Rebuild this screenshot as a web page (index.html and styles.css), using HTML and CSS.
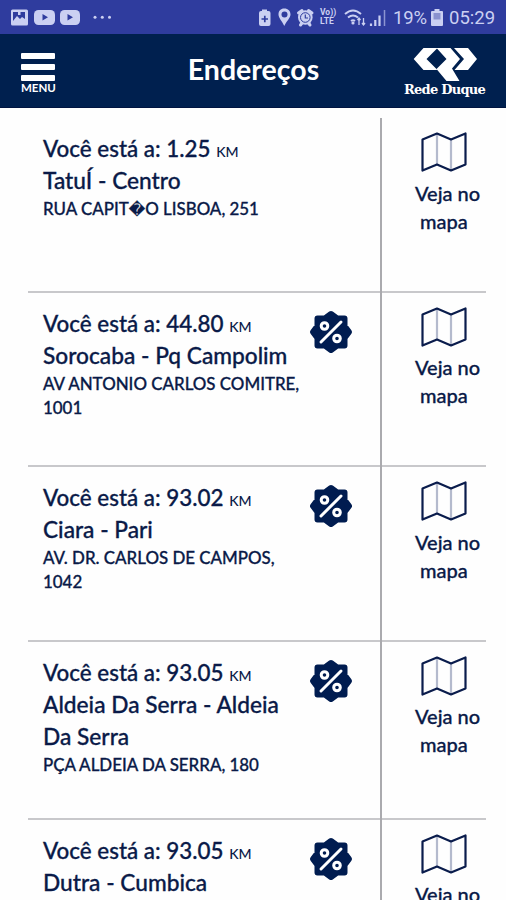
FILE: index.html
```html
<!DOCTYPE html>
<html lang="pt-BR">
<head>
<meta charset="utf-8">
<title>Endereços</title>
<link rel="stylesheet" href="styles.css">
</head>
<body>
<svg width="0" height="0" class="defs">
  <symbol id="map" viewBox="0 0 48 42">
    <path d="M17 3V34M31 8V40" fill="none" stroke="#b4bacd" stroke-width="2.2"/>
    <path d="M2.500 8.500L17 2.500L31 8.500L45.500 2.500V33.500L31 39.500L17 33.500L2.500 39.500Z" fill="none" stroke="#0a1c4c" stroke-width="2.2" stroke-linejoin="round"/>
  </symbol>
  <symbol id="badge" viewBox="0 0 44 44">
    <path d="M22 4L28 8.500H35.500V16L40 22L35.500 28V35.500H28L22 40L16 35.500H8.500V28L4 22L8.500 16V8.500H16Z" fill="#001c50" stroke="#001c50" stroke-width="6" stroke-linejoin="round"/>
    <path d="M32 12L12 32" stroke="#fff" stroke-width="3" stroke-linecap="round"/>
    <g fill="none" stroke="#fff" stroke-width="3"><circle cx="15.500" cy="16" r="3.300"/><circle cx="28" cy="28.500" r="3.300"/></g>
  </symbol>
</svg>

<div class="status">
  <svg class="status-left" width="120" height="34" viewBox="0 0 120 34" fill="#cbd0f2">
    <rect x="11" y="9.500" width="17" height="16" rx="1.500"/>
    <path d="M13 12H25V19L22 17L20 19L17 16L13 21Z" fill="#2f3c9e"/>
    <rect x="18" y="12" width="2.500" height="3"/>
    <rect x="34" y="10" width="21" height="15" rx="4.500"/>
    <rect x="60" y="10" width="20" height="15" rx="4.500"/>
    <path d="M42.500 14L48 17.300L42.500 20.500ZM67.500 14L73 17.300L67.500 20.500Z" fill="#2f3c9e"/>
    <circle cx="95" cy="17.300" r="1.500"/><circle cx="102.300" cy="17.300" r="1.500"/><circle cx="109.500" cy="17.300" r="1.500"/>
  </svg>
  <div class="status-right">
    <svg width="62" height="34" viewBox="258 0 62 34" fill="#cbd0f2">
      <path d="M262 9.500H267V11H268.500Q270.500 11 270.500 13V24Q270.500 26 268.500 26H261Q259 26 259 24V13Q259 11 261 11H262Z"/>
      <path d="M261.500 19H268M264.800 15.800V22.200" stroke="#2f3c9e" stroke-width="1.700"/>
      <path d="M284.300 8.500C280.500 8.500 278.500 11 278.500 14.500C278.500 18 282 21 284.300 26C286.600 21 290.500 18 290.500 14.500C290.500 11 288.100 8.500 284.300 8.500Z"/>
      <circle cx="284.500" cy="14.500" r="3" fill="#2f3c9e"/>
      <circle cx="305.300" cy="17.500" r="7.300"/>
      <path d="M298.500 13L302 10.500M308.500 10.500L312 13M300.500 25L302 23M310 25L308.500 23" stroke="#cbd0f2" stroke-width="3" stroke-linecap="round"/>
      <circle cx="305.300" cy="17.500" r="4.800" fill="none" stroke="#2f3c9e" stroke-width="1"/>
      <path d="M305.300 14.500V18H308" fill="none" stroke="#2f3c9e" stroke-width="1.200"/>
    </svg>
    <span class="volte"><span>Vo))</span><span>LTE</span></span>
    <svg width="46" height="34" viewBox="342 0 46 34" fill="none" stroke="#cbd0f2">
      <path d="M345 14Q353 7 361 14M348 17.500Q353 13.500 358 17.500M351 21Q353 19.500 355 21" stroke-width="2"/>
      <circle cx="353" cy="23" r="1.600" fill="#cbd0f2" stroke="none"/>
      <path d="M359 18V25M357.500 20L359 18L360.500 20M363.500 18V25M362 23L363.500 25L365 23" stroke-width="1.300"/>
      <path d="M371 23.500V26M375.300 20V26M379.500 15.500V26" stroke-width="2.200"/>
      <path d="M384.500 10V26" stroke="#8c94d1" stroke-width="1.500"/>
    </svg>
    <span class="pct">19%</span>
    <svg width="14" height="34" viewBox="430 0 14 34">
      <path d="M434.500 9H439.500V11H442Q443 11 443 12V25Q443 26 442 26H432Q431 26 431 25V12Q431 11 432 11H434.500Z" fill="#cbd0f2"/>
      <rect x="433.500" y="13" width="7" height="6.500" fill="#8991cf"/>
    </svg>
    <span class="time">05:29</span>
  </div>
</div>

<header class="header">
  <div class="menu">
    <i class="bar"></i><i class="bar"></i><i class="bar"></i>
    <span>MENU</span>
  </div>
  <h1 class="title">Endereços</h1>
  <div class="logo">
    <svg width="66" height="35" viewBox="0 0 66 35" fill="#fff">
      <path d="M10.500 1H24.500L13.500 12L24.500 23H10.500L.700 12Z"/>
      <path d="M23.500 1H37.500L47 12L39 21.500L46.500 34H33.500L23.500 22L33.500 12Z"/>
      <path d="M41 1H55L64 12L55 23H41.500L51 12Z"/>
    </svg>
    <span>Rede Duque</span>
  </div>
</header>

<main class="list">
  <section class="row">
    <div class="info">
      <p class="line">Você está a: 1.25 <small>KM</small></p>
      <p class="line">TatuÍ - Centro</p>
      <p class="addr">RUA CAPIT<span class="unknown">&#xFFFD;</span>O LISBOA, 251</p>
    </div>
    <a class="go"><svg width="48" height="42"><use href="#map"/></svg><span>Veja no</span><span class="second">mapa</span></a>
  </section>
  <section class="row">
    <div class="info">
      <p class="line">Você está a: 44.80 <small>KM</small></p>
      <p class="line">Sorocaba - Pq Campolim</p>
      <p class="addr">AV ANTONIO CARLOS COMITRE,<br>1001</p>
    </div>
    <svg class="badge" width="44" height="44"><use href="#badge"/></svg>
    <a class="go"><svg width="48" height="42"><use href="#map"/></svg><span>Veja no</span><span class="second">mapa</span></a>
  </section>
  <section class="row">
    <div class="info">
      <p class="line">Você está a: 93.02 <small>KM</small></p>
      <p class="line">Ciara - Pari</p>
      <p class="addr">AV. DR. CARLOS DE CAMPOS,<br>1042</p>
    </div>
    <svg class="badge" width="44" height="44"><use href="#badge"/></svg>
    <a class="go"><svg width="48" height="42"><use href="#map"/></svg><span>Veja no</span><span class="second">mapa</span></a>
  </section>
  <section class="row tall">
    <div class="info">
      <p class="line">Você está a: 93.05 <small>KM</small></p>
      <p class="line">Aldeia Da Serra - Aldeia<br>Da Serra</p>
      <p class="addr">PÇA ALDEIA DA SERRA, 180</p>
    </div>
    <svg class="badge" width="44" height="44"><use href="#badge"/></svg>
    <a class="go"><svg width="48" height="42"><use href="#map"/></svg><span>Veja no</span><span class="second">mapa</span></a>
  </section>
  <section class="row">
    <div class="info">
      <p class="line">Você está a: 93.05 <small>KM</small></p>
      <p class="line">Dutra - Cumbica</p>
    </div>
    <svg class="badge" width="44" height="44"><use href="#badge"/></svg>
    <a class="go"><svg width="48" height="42"><use href="#map"/></svg><span>Veja no</span></a>
  </section>
</main>
</body>
</html>
```
FILE: styles.css
```css
* { box-sizing: border-box; }
body {
  margin: 0;
  height: 900px;
  overflow: hidden;
  display: flex;
  flex-direction: column;
  background: #fefefe;
  color: #0a1a48;
  font-family: Lato, "Liberation Sans", sans-serif;
  font-weight: 500;
}
p, h1 { margin: 0; }
.defs { position: absolute; }

.status {
  flex: none;
  height: 34px;
  display: flex;
  justify-content: space-between;
  background: #2f3c9e;
  color: #cbd0f2;
  font-family: Roboto, sans-serif;
}
.status-right { display: flex; width: 248px; align-items: center; }
.status-right svg { flex: none; }
.volte { flex: none; width: 22px; display: flex; flex-direction: column; font-size: 8.5px; line-height: 9px; font-weight: 700; white-space: nowrap; }
.pct { flex: none; width: 42px; padding: 1px 0 0 5px; font-size: 18.5px; line-height: 34px; letter-spacing: -.1px; font-weight: 400; }
.time { padding: 1px 0 0 5px; font-size: 18.5px; line-height: 34px; font-weight: 400; white-space: nowrap; }

.header {
  flex: none;
  height: 74px;
  display: grid;
  grid-template-columns: 104px 1fr 104px;
  background: #00204f;
  border-bottom: 1px solid #001440;
  color: #fff;
}
.menu { width: 34px; margin: 19px 0 0 21px; display: flex; flex-direction: column; gap: 5px; }
.bar { height: 6px; background: #fff; border-radius: 1px; }
.menu span { margin-top: -4px; font-size: 11.500px; line-height: 12px; font-weight: 700; white-space: nowrap; }
.title { padding: 17px 0 0 1px; text-align: center; font-size: 28.500px; line-height: 36px; font-weight: 700; }
.logo { padding-top: 13px; display: flex; flex-direction: column; }
.logo svg { margin-left: 11px; }
.logo span { margin: 0 0 0 2px; font-family: "DejaVu Serif", serif; font-size: 13px; line-height: 16px; font-weight: 700; letter-spacing: -.75px; white-space: nowrap; }

.list { padding: 10px 20px 0 28px; }
.row { height: 174.500px; display: flex; border-bottom: 2px solid #c8c8cb; }
.tall { height: 178px; }
.info { flex: 1; padding: 15px 0 0 15px; white-space: nowrap; -webkit-text-stroke: .3px #0a1a48; }
.line { font-size: 22.700px; line-height: 32px; }
.line:first-child { font-size: 22.400px; }
.line small { font-size: 14px; line-height: 0; -webkit-text-stroke: 0; }
.addr { font-size: 16.900px; line-height: 24px; }
.unknown { font-family: "DejaVu Sans", sans-serif; font-size: 16px; line-height: 0; }
.badge { flex: none; margin: 17px 27px 0 0; }
.go {
  flex: none;
  width: 106px;
  height: 174.500px;
  padding: 13px 0 0 38px;
  border-left: 2px solid #aaaaae;
  display: flex;
  flex-direction: column;
  font-size: 20px;
  line-height: 28px;
  -webkit-text-stroke: .3px #0a1a48;
}
.tall .go { height: 178px; }
.go span { margin-left: -5px; white-space: nowrap; }
.go .second { margin-left: 0; }
.go svg { flex: none; margin-bottom: 5.500px; }
```
